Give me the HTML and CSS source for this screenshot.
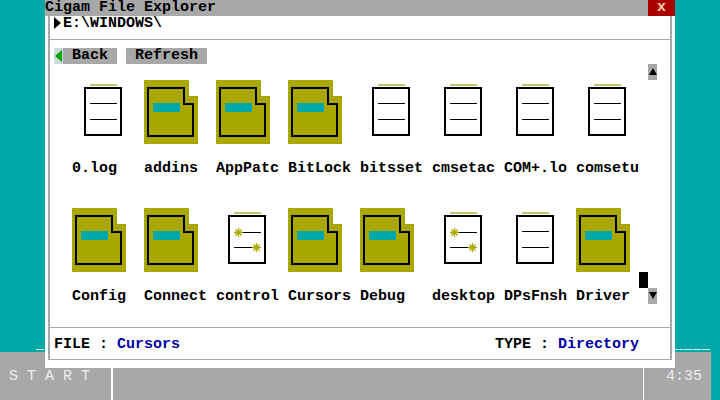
FILE: index.html
```html
<!DOCTYPE html>
<html lang="en">
<head>
<meta charset="utf-8">
<title>Cigam File Explorer</title>
<link rel="stylesheet" href="styles.css">
</head>
<body>
<svg class="defs" width="0" height="0" aria-hidden="true">
  <symbol id="folder" viewBox="0 0 54 64">
    <path fill="#a8a800" d="M0 0H45V16H54V64H0Z"/>
    <path fill="none" stroke="#000" stroke-width="2" d="M4 8H40V24H49V56H4Z"/>
    <rect fill="#00a8a8" x="9" y="23" width="27" height="9"/>
  </symbol>
  <symbol id="file" viewBox="0 0 54 64">
    <path stroke="#a8a830" stroke-width="1.4" d="M18 5H45"/>
    <rect fill="#fff" stroke="#000" stroke-width="2" x="13" y="8" width="36" height="47"/>
    <path stroke="#000" d="M18 23.5H45M18 39.500H45"/>
  </symbol>
  <symbol id="config" viewBox="0 0 54 64">
    <path stroke="#a8a830" stroke-width="1.4" d="M18 5H45"/>
    <rect fill="#fff" stroke="#000" stroke-width="2" x="13" y="8" width="36" height="47"/>
    <path stroke="#000" d="M22 24.500H45M18 39.500H40"/>
    <path stroke="#a8a800" stroke-width="1.300" d="M18 24.500H27M22.500 20V29M19.500 21.500L25.500 27.500M25.500 21.500L19.500 27.500M36 39.500H45M40.500 35V44M37.500 36.500L43.500 42.500M43.500 36.500L37.500 42.500"/>
  </symbol>
</svg>

<main class="desktop">
  <section class="window">
    <header class="titlebar">
      <h1 class="title">Cigam File Explorer</h1>
      <button class="close" type="button">x</button>
    </header>
    <div class="panel">
      <div class="path"><span class="caret"></span>E:\WINDOWS\</div>
      <nav class="toolbar">
        <button class="tool tool-back" type="button"><span class="back-arrow"></span>Back</button>
        <button class="tool tool-refresh" type="button">Refresh</button>
      </nav>
      <div class="body">
        <div class="grid">
          <div class="item"><svg class="icon"><use href="#file"/></svg><span class="label">0.log</span></div>
          <div class="item"><svg class="icon"><use href="#folder"/></svg><span class="label">addins</span></div>
          <div class="item"><svg class="icon"><use href="#folder"/></svg><span class="label">AppPatc</span></div>
          <div class="item"><svg class="icon"><use href="#folder"/></svg><span class="label">BitLock</span></div>
          <div class="item"><svg class="icon"><use href="#file"/></svg><span class="label">bitsset</span></div>
          <div class="item"><svg class="icon"><use href="#file"/></svg><span class="label">cmsetac</span></div>
          <div class="item"><svg class="icon"><use href="#file"/></svg><span class="label">COM+.lo</span></div>
          <div class="item"><svg class="icon"><use href="#file"/></svg><span class="label">comsetu</span></div>
          <div class="item"><svg class="icon"><use href="#folder"/></svg><span class="label">Config</span></div>
          <div class="item"><svg class="icon"><use href="#folder"/></svg><span class="label">Connect</span></div>
          <div class="item"><svg class="icon"><use href="#config"/></svg><span class="label">control</span></div>
          <div class="item"><svg class="icon"><use href="#folder"/></svg><span class="label">Cursors</span></div>
          <div class="item"><svg class="icon"><use href="#folder"/></svg><span class="label">Debug</span></div>
          <div class="item"><svg class="icon"><use href="#config"/></svg><span class="label">desktop</span></div>
          <div class="item"><svg class="icon"><use href="#file"/></svg><span class="label">DPsFnsh</span></div>
          <div class="item"><svg class="icon"><use href="#folder"/></svg><span class="label">Driver</span></div>
        </div>
        <div class="scrollbar">
          <span class="scroll-btn"><span class="tri-up"></span></span>
          <span class="cursor-block"></span>
          <span class="scroll-btn"><span class="tri-down"></span></span>
        </div>
      </div>
      <footer class="status">
        <div class="field"><b>FILE :</b><span class="value">Cursors</span></div>
        <div class="field"><b>TYPE :</b><span class="value">Directory</span></div>
      </footer>
    </div>
  </section>

  <div class="taskbar">
    <span class="edge edge-left"></span>
    <span class="edge edge-right"></span>
    <div class="start">S T A R T</div>
    <div class="task-mid"></div>
    <div class="clock">4:35</div>
  </div>
</main>
</body>
</html>
```
FILE: styles.css
```css
* { box-sizing: border-box; }
html, body { margin: 0; padding: 0; }
body {
  width: 720px;
  height: 400px;
  overflow: hidden;
  background: #00a8a8;
  font: bold 15px/16px "Liberation Mono", monospace;
  color: #000;
}
.defs { position: absolute; }
.desktop {
  position: relative;
  width: 720px;
  height: 400px;
  display: flex;
  flex-direction: column;
  justify-content: flex-end;
}

.window {
  position: absolute;
  z-index: 1;
  left: 45px;
  top: 0;
  width: 630px;
  height: 368px;
  background: #fff;
  display: flex;
  flex-direction: column;
}
.titlebar {
  display: flex;
  height: 16px;
  background: #a8a8a8;
}
.title {
  flex: 1;
  margin: 0;
  font: inherit;
}
.close {
  width: 27px;
  padding: 0;
  border: 0;
  background: #a80000;
  color: #ffd0a8;
  font: inherit;
}
.panel {
  margin: 0 3px;
  height: 344px;
  border: solid #a8a8a8;
  border-width: 0 2px 1px;
  display: flex;
  flex-direction: column;
}
.path {
  height: 24px;
  padding-left: 4px;
  border-bottom: 1px solid #a8a8a8;
  display: flex;
  align-items: flex-start;
}
.caret {
  width: 9px;
  height: 16px;
  position: relative;
}
.caret::before {
  content: "";
  position: absolute;
  left: 0;
  top: 1px;
  border-left: 7px solid #000;
  border-top: 6px solid transparent;
  border-bottom: 6px solid transparent;
}
.toolbar {
  display: flex;
  gap: 9px;
  padding: 8px 0 0 4px;
}
.tool {
  height: 16px;
  padding: 0;
  border: 0;
  background: #a8a8a8;
  color: #000;
  font: inherit;
  display: flex;
}
.tool-back { width: 63px; }
.tool-refresh { width: 81px; padding-left: 9px; }
.back-arrow {
  width: 18px;
  height: 16px;
  position: relative;
}
.back-arrow::before {
  content: "";
  position: absolute;
  left: 0;
  top: 0;
  width: 9px;
  height: 16px;
  background: #cfd8d8;
}
.back-arrow::after {
  content: "";
  position: absolute;
  left: 1px;
  top: 2px;
  border-right: 7px solid #00a800;
  border-top: 6px solid transparent;
  border-bottom: 6px solid transparent;
}

.body {
  display: flex;
  padding-left: 22px;
  height: 240px;
}
.grid {
  width: 576px;
  padding-top: 16px;
  display: grid;
  grid-template-columns: repeat(8, 72px);
  grid-auto-rows: 97px;
  row-gap: 31px;
}
.item { display: flex; flex-direction: column; }
.icon { display: block; flex: none; width: 54px; height: 64px; margin-bottom: 17px; }
.label { white-space: nowrap; }

.scrollbar {
  position: relative;
  width: 9px;
  display: flex;
  flex-direction: column;
  justify-content: space-between;
}
.scroll-btn {
  width: 9px;
  height: 16px;
  background: #a8a8a8;
  position: relative;
  display: block;
}
.tri-up, .tri-down {
  position: absolute;
  left: 1px;
  border-left: 4px solid transparent;
  border-right: 4px solid transparent;
}
.tri-up { top: 4px; border-bottom: 7px solid #000; }
.tri-down { top: 4px; border-top: 7px solid #000; }
.cursor-block {
  position: absolute;
  left: -9px;
  top: 208px;
  width: 9px;
  height: 16px;
  background: #000;
}

.status {
  margin-top: 23px;
  height: 32px;
  border-top: 1px solid #a8a8a8;
  padding: 9px 0 0 4px;
  display: flex;
}
.field { display: flex; gap: 9px; }
.field:first-child { width: 441px; }
.value { color: #0000a8; }

.taskbar {
  position: relative;
  height: 48px;
  display: flex;
  color: #eee;
  font-weight: normal;
}
.edge {
  position: absolute;
  top: -3px;
  height: 1px;
  background: repeating-linear-gradient(90deg, #d8f4f4 0 8px, #00a8a8 8px 9px);
}
.edge-left { left: 36px; width: 9px; }
.edge-right { left: 675px; width: 36px; }
.start, .task-mid, .clock {
  background: #a8a8a8;
  padding-top: 17px;
}
.start { width: 111px; padding-left: 9px; white-space: pre; }
.task-mid {
  width: 533px;
  border-left: 2px solid #fff;
  border-right: 1px solid #fff;
}
.clock { width: 67px; padding-left: 22px; }
```
